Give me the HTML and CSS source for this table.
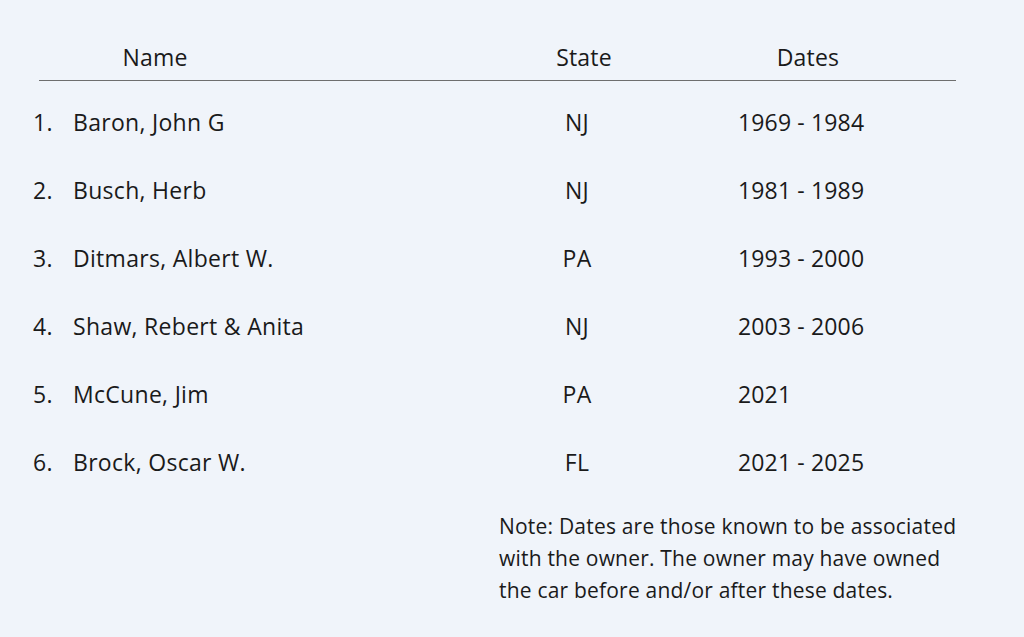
FILE: index.html
```html
<!DOCTYPE html>
<html lang="en">
<head>
<meta charset="utf-8">
<title>Owners</title>
<link rel="stylesheet" href="styles.css">
</head>
<body>
<div class="page">
  <div class="head">
    <div class="h-name">Name</div>
    <div class="h-state">State</div>
    <div class="h-dates">Dates</div>
  </div>
  <ol class="rows">
    <li class="row"><span class="num">1.</span><span class="name">Baron, John G</span><span class="state">NJ</span><span class="dates">1969 - 1984</span></li>
    <li class="row"><span class="num">2.</span><span class="name">Busch, Herb</span><span class="state">NJ</span><span class="dates">1981 - 1989</span></li>
    <li class="row"><span class="num">3.</span><span class="name">Ditmars, Albert W.</span><span class="state">PA</span><span class="dates">1993 - 2000</span></li>
    <li class="row"><span class="num">4.</span><span class="name">Shaw, Rebert &amp; Anita</span><span class="state">NJ</span><span class="dates">2003 - 2006</span></li>
    <li class="row"><span class="num">5.</span><span class="name">McCune, Jim</span><span class="state">PA</span><span class="dates">2021</span></li>
    <li class="row"><span class="num">6.</span><span class="name">Brock, Oscar W.</span><span class="state">FL</span><span class="dates">2021 - 2025</span></li>
  </ol>
  <p class="note">Note: Dates are those known to be associated with the owner. The owner may have owned the car before and/or after these dates.</p>
</div>
</body>
</html>
```
FILE: styles.css
```css
html, body {
  margin: 0;
  padding: 0;
  background: #f0f4fa;
}
body {
  font-family: "Open Sans", "Noto Sans", sans-serif;
  color: #1a1a1a;
  width: 1024px;
  height: 637px;
  overflow: hidden;
}
.page {
  padding-top: 41px;
}
.head {
  display: grid;
  grid-template-columns: 232px 199px 228px 220px;
  margin-left: 39px;
  width: 917px;
  font-size: 23px;
  line-height: 32px;
  letter-spacing: 0.2px;
  padding-bottom: 7px;
  border-bottom: 1px solid #6e6e6e;
}
.h-name, .h-state, .h-dates {
  text-align: center;
}
.h-state {
  grid-column: 3;
}
.h-dates {
  grid-column: 4;
}
.rows {
  list-style: none;
  margin: 7px 0 0 33px;
  padding: 0;
}
.row {
  display: grid;
  grid-template-columns: 40px 440px 128px 1fr;
  align-items: center;
  height: 68px;
  font-size: 23px;
  letter-spacing: 0.3px;
}
.state {
  text-align: center;
}
.dates {
  padding-left: 97px;
  letter-spacing: 0.15px;
}
.note {
  margin: 14px 0 0 499px;
  width: 470px;
  font-size: 21px;
  line-height: 32px;
  letter-spacing: 0.2px;
}
```
